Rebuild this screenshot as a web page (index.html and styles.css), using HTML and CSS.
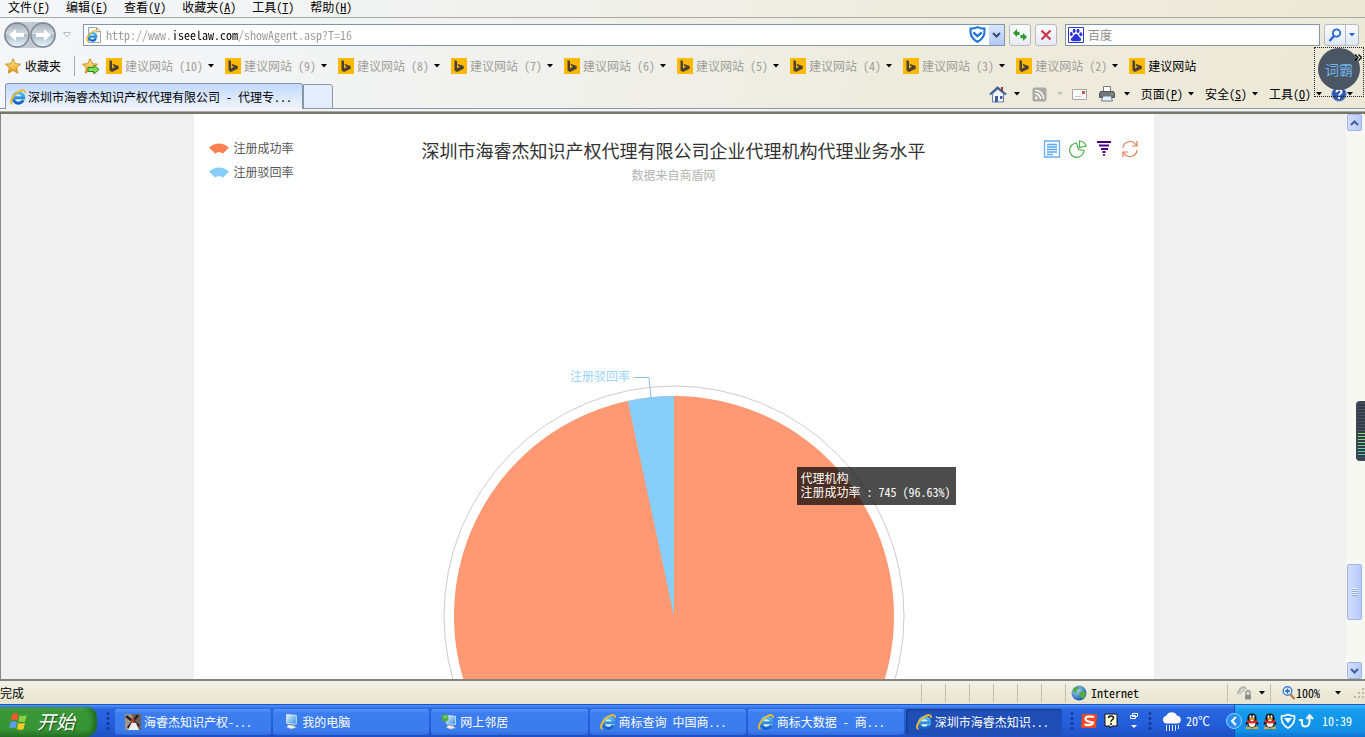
FILE: index.html
```html
<!DOCTYPE html>
<html lang="zh-CN">
<head>
<meta charset="utf-8">
<title>深圳市海睿杰知识产权代理有限公司 - 代理专利</title>
<link rel="stylesheet" href="styles.css">
</head>
<body>
<svg class="defs" aria-hidden="true">
  <defs>
    <linearGradient id="g-nav" x1="0" y1="0" x2="0" y2="1"><stop offset="0" stop-color="#a3adb8"/><stop offset=".45" stop-color="#d3dae1"/><stop offset=".5" stop-color="#adbac7"/><stop offset="1" stop-color="#e6f9fd"/></linearGradient>
    <linearGradient id="g-star" x1="0" y1="0" x2="0" y2="1"><stop offset="0" stop-color="#fff3a0"/><stop offset="1" stop-color="#f0960c"/></linearGradient>
    <linearGradient id="g-ie" x1="0" y1="0" x2="0" y2="1"><stop offset="0" stop-color="#4cbcf2"/><stop offset="1" stop-color="#1160c4"/></linearGradient>
    <linearGradient id="g-screen" x1="0" y1="0" x2="1" y2="1"><stop offset="0" stop-color="#e8f8ff"/><stop offset="1" stop-color="#2c8fe0"/></linearGradient>
    <radialGradient id="g-globe" cx=".35" cy=".3" r=".8"><stop offset="0" stop-color="#a8dcff"/><stop offset="1" stop-color="#0a4aa0"/></radialGradient>
  </defs>
  <symbol id="ie" viewBox="0 0 16 16"><circle cx="8.500" cy="8.500" r="6.300" fill="#d9f0fd"/><path d="M13.300 11A5.200 5.200 0 1 1 13.700 8.800H5" fill="none" stroke="url(#g-ie)" stroke-width="3"/><path d="M2.500 15C-1 14 2 7 8 3c3.500-2.400 7.500-3 6.800.8" fill="none" stroke="#f3b92c" stroke-width="1.900"/></symbol>
  <symbol id="bing" viewBox="0 0 16 16"><path fill="#ffb900" d="M0 0h16v16H0z"/><path fill="#4a4238" d="M3.500 2l2.500.9v7.600l3-1.700-1.600-.8-1-2.300 6.300 2.300v2.700L6 14l-2.500-1.500z"/></symbol>
  <symbol id="star" viewBox="0 0 16 16"><path d="M8 .8l2.200 4.900 5.300.5-4 3.600 1.200 5.300L8 12.300l-4.700 2.800 1.200-5.300-4-3.600 5.300-.5z" fill="url(#g-star)" stroke="#c58412" stroke-width=".9"/></symbol>
  <symbol id="down" viewBox="0 0 6 4"><path d="M0 0h6L3 3.500z" fill="currentColor"/></symbol>
  <symbol id="shield" viewBox="0 0 16 16"><path d="M1.500 2.500Q5 2.600 8 1q3 1.600 6.500 1.500v4Q14 11.500 8 15 2 11.500 1.500 6.500z" fill="#fff" stroke="currentColor" stroke-width="2"/><path d="M4 6l4 3.500L12 6" fill="none" stroke="currentColor" stroke-width="2.200"/></symbol>
  <symbol id="qq" viewBox="0 0 16 16"><path d="M2 15h5.500M8.500 15H14" stroke="#f7a813" stroke-width="2"/><path d="M3.500 7C3 2 5 .5 8 .5S13 2 12.500 7l2.200 4-1 1-1.200-1q-.5 3.500-4.500 3.500T3.500 11l-1.200 1-1-1z" fill="#191919"/><ellipse cx="8" cy="10.500" rx="3.400" ry="3.500" fill="#fff"/><ellipse cx="6.500" cy="3.700" rx="1" ry="1.400" fill="#fff"/><ellipse cx="9.500" cy="3.700" rx="1" ry="1.400" fill="#fff"/><ellipse cx="8" cy="6" rx="3" ry=".9" fill="#f8a91a"/><path d="M3.200 7q4.800 2.300 9.600 0l.4 2.400q-5.200 2-10.400 0z" fill="#e5231b"/></symbol>
  <symbol id="pc" viewBox="0 0 18 18"><path d="M4 .5l11 1v10l-11-1z" fill="url(#g-screen)" stroke="#cfe4f8"/><path d="M6 12l6 1 3 2.500-6 1.500-5-2z" fill="#eeeee8" stroke="#8693a5" stroke-width=".6"/></symbol>
</svg>

<header class="chrome">
  <nav class="menu">
    <button>文件(<u>F</u>)</button><button>编辑(<u>E</u>)</button><button>查看(<u>V</u>)</button><button>收藏夹(<u>A</u>)</button><button>工具(<u>T</u>)</button><button>帮助(<u>H</u>)</button>
  </nav>

  <div class="address-row">
    <div class="travel">
      <button aria-label="后退"><svg width="26" height="26" viewBox="0 0 26 26"><circle cx="13" cy="13" r="12" fill="url(#g-nav)" stroke="#7d8894" stroke-width="1.500"/><path d="M5 13l7-6v4h8v4h-8v4z" fill="#fff"/></svg></button>
      <button aria-label="前进"><svg width="26" height="26" viewBox="0 0 26 26"><circle cx="13" cy="13" r="12" fill="url(#g-nav)" stroke="#7d8894" stroke-width="1.500"/><path d="M21 13l-7-6v4H6v4h8v4z" fill="#fff"/></svg></button>
    </div>
    <button class="recent" aria-label="最近页面"><svg width="8" height="6" viewBox="0 0 8 6"><path d="M.5.500h7L4 5z" fill="#fff" stroke="#b6bac0"/></svg></button>
    <div class="field url">
      <svg width="16" height="16" viewBox="0 0 16 16"><path d="M2.500.500h8l4 4v11h-12z" fill="#fff" stroke="#9aa4ae"/><path d="M10.500.500v4h4" fill="none" stroke="#9aa4ae"/><use href="#ie" x="0" y="3" width="12" height="12"/></svg>
      <input aria-label="地址" value="http://www.iseelaw.com/showAgent.asp?T=16">
      <svg class="guard" width="17" height="17"><use href="#shield"/></svg>
      <button class="drop" aria-label="展开地址"><svg width="9" height="6" viewBox="0 0 9 6"><path d="M1 1l3.500 3.500L8 1" fill="none" stroke="#38496e" stroke-width="2"/></svg></button>
    </div>
    <button class="square" aria-label="刷新"><svg width="14" height="14" viewBox="0 0 14 14"><path d="M0 5l4-4v2.800h2.500V7H4v2zM14 9l-4 4v-2.800H7.500V7H10V5z" fill="#2e9b2e"/></svg></button>
    <button class="square" aria-label="停止"><svg width="12" height="12" viewBox="0 0 12 12"><path d="M1.500 1.500l9 9M10.500 1.500l-9 9" stroke="#c8394a" stroke-width="2.200"/></svg></button>
    <div class="field search">
      <svg width="16" height="16" viewBox="0 0 16 16"><path d="M.5.500h15v15H.5z" fill="#fff" stroke="#2b35d8"/><g fill="#2b35d8"><ellipse cx="3.300" cy="7" rx="1.500" ry="2"/><ellipse cx="6.200" cy="3.800" rx="1.500" ry="2.100"/><ellipse cx="10" cy="3.900" rx="1.500" ry="2.100"/><ellipse cx="12.800" cy="7.300" rx="1.500" ry="2"/><path d="M8 6.800q1.500.2 2.500 2t2.400 2.500q.7 3.300-2.400 3H5.500q-3.100.3-2.400-3 1.400-.8 2.400-2.500t2.500-2z"/></g></svg>
      <input aria-label="搜索" placeholder="百度">
    </div>
    <div class="search-buttons">
      <button aria-label="搜索"><svg width="14" height="14" viewBox="0 0 14 14"><circle cx="8.500" cy="5" r="3.700" fill="#eef6ff" stroke="#2867d8" stroke-width="1.800"/><path d="M6 8l-4.500 5" stroke="#2867d8" stroke-width="2.400"/></svg></button>
      <button aria-label="搜索选项"><svg class="blue" width="6" height="4"><use href="#down"/></svg></button>
    </div>
  </div>

  <div class="favorites">
    <button class="fav-main"><svg width="16" height="16"><use href="#star"/></svg>收藏夹</button>
    <button class="fav-add" aria-label="添加到收藏夹栏"><svg width="18" height="17" viewBox="0 0 18 17"><use href="#star" width="16" height="16"/><path d="M6 9.500h6V7l5 4.500-5 4.500v-2.500H6z" fill="#7fdb58" stroke="#258a24"/></svg></button>
    <nav class="links">
      <a href="#"><svg width="16" height="16"><use href="#bing"/></svg><span>建议网站 (10)</span><svg class="arrow" width="6" height="4"><use href="#down"/></svg></a>
      <a href="#"><svg width="16" height="16"><use href="#bing"/></svg><span>建议网站 (9)</span><svg class="arrow" width="6" height="4"><use href="#down"/></svg></a>
      <a href="#"><svg width="16" height="16"><use href="#bing"/></svg><span>建议网站 (8)</span><svg class="arrow" width="6" height="4"><use href="#down"/></svg></a>
      <a href="#"><svg width="16" height="16"><use href="#bing"/></svg><span>建议网站 (7)</span><svg class="arrow" width="6" height="4"><use href="#down"/></svg></a>
      <a href="#"><svg width="16" height="16"><use href="#bing"/></svg><span>建议网站 (6)</span><svg class="arrow" width="6" height="4"><use href="#down"/></svg></a>
      <a href="#"><svg width="16" height="16"><use href="#bing"/></svg><span>建议网站 (5)</span><svg class="arrow" width="6" height="4"><use href="#down"/></svg></a>
      <a href="#"><svg width="16" height="16"><use href="#bing"/></svg><span>建议网站 (4)</span><svg class="arrow" width="6" height="4"><use href="#down"/></svg></a>
      <a href="#"><svg width="16" height="16"><use href="#bing"/></svg><span>建议网站 (3)</span><svg class="arrow" width="6" height="4"><use href="#down"/></svg></a>
      <a href="#"><svg width="16" height="16"><use href="#bing"/></svg><span>建议网站 (2)</span><svg class="arrow" width="6" height="4"><use href="#down"/></svg></a>
      <a href="#" class="plain"><svg width="16" height="16"><use href="#bing"/></svg><span>建议网站</span></a>
    </nav>
  </div>

  <div class="tab-row">
    <button class="tab"><svg width="16" height="16"><use href="#ie"/></svg><span>深圳市海睿杰知识产权代理有限公司 - 代理专...</span></button>
    <button class="new-tab" aria-label="新选项卡"></button>
    <div class="commands">
      <button aria-label="主页"><svg width="18" height="17" viewBox="0 0 18 17"><path d="M3.500 8v8h11V8L9 3z" fill="#f4f7fd" stroke="#6d7ea5"/><path d="M1 8.500L8.500 1.500 17 8.500" fill="none" stroke="#3f5c9c" stroke-width="2"/><path d="M12 1h2v4h-2z" fill="#a13a32"/><path d="M6 10h3v6H6z" fill="#3c5fa8"/><path d="M11 10h2.500v3H11z" fill="#3c5fa8"/></svg><svg class="arrow" width="6" height="4"><use href="#down"/></svg></button>
      <button class="off" aria-label="源"><svg width="15" height="15" viewBox="0 0 15 15"><rect x=".5" y=".5" width="14" height="14" rx="2" fill="#aaa9a2"/><path d="M3 6.500a5.500 5.500 0 0 1 5.500 5.500M3 3.200A8.800 8.800 0 0 1 11.800 12" fill="none" stroke="#fff" stroke-width="1.500"/><circle cx="4.200" cy="10.900" r="1.400" fill="#fff"/></svg><svg class="arrow" width="6" height="4"><use href="#down"/></svg></button>
      <button class="mail" aria-label="阅读邮件"><svg width="15" height="11" viewBox="0 0 15 11"><path d="M.5.500h14v10H.5z" fill="#fbfbfa" stroke="#a7a7a7"/><path d="M10 2h3v3h-3z" fill="#cf5a50"/><path d="M3 7.500h6" stroke="#c8c8c8"/></svg></button>
      <button class="print" aria-label="打印"><svg width="16" height="16" viewBox="0 0 16 16"><path d="M4.500.500h7v6h-7z" fill="#fff" stroke="#777"/><path d="M1.500 5.500h13l1 2v4H.500v-4z" fill="#72767b" stroke="#505459"/><path d="M4 10h8l1.500 5h-11z" fill="#e4f2ff" stroke="#6b7a88"/><path d="M12 8h2" stroke="#7be46d"/></svg><svg class="arrow" width="6" height="4"><use href="#down"/></svg></button>
      <button class="named"><span>页面(<u>P</u>)</span><svg class="arrow" width="6" height="4"><use href="#down"/></svg></button>
      <button class="named"><span>安全(<u>S</u>)</span><svg class="arrow" width="6" height="4"><use href="#down"/></svg></button>
      <button class="named"><span>工具(<u>O</u>)</span><svg class="arrow" width="6" height="4"><use href="#down"/></svg></button>
      <button class="help" aria-label="帮助"><svg width="16" height="16" viewBox="0 0 16 16"><circle cx="8" cy="8" r="7.300" fill="#3157ae" stroke="#93a9d8"/><path d="M5.500 6.200q0-2.400 2.500-2.400t2.500 2.200q0 1-1.200 1.700T8.100 9.600M8 11v2" fill="none" stroke="#fff" stroke-width="1.900"/></svg><svg class="arrow" width="6" height="4"><use href="#down"/></svg></button>
    </div>
  </div>
  <aside class="word-helper">
    <button>词霸</button>
    <svg class="more" width="8" height="7" viewBox="0 0 8 7"><path d="M1 .5l3 3-3 3M4.500.500l3 3-3 3" fill="none" stroke="#000" stroke-width="1.300"/></svg>
  </aside>
</header>

<main class="viewport">
  <section class="page">
    <div class="chart-head">
      <ul class="legend">
        <li><svg width="20" height="11" viewBox="0 0 20 11"><path d="M0 4.500Q10-3.500 20 4.500L14 10.500Q10 7.500 6 10.500z" fill="#ff7f50"/></svg>注册成功率</li>
        <li><svg width="20" height="11" viewBox="0 0 20 11"><path d="M0 4.500Q10-3.500 20 4.500L14 10.500Q10 7.500 6 10.500z" fill="#87cefa"/></svg>注册驳回率</li>
      </ul>
      <div class="titles">
        <h1>深圳市海睿杰知识产权代理有限公司企业代理机构代理业务水平</h1>
        <p>数据来自商盾网</p>
      </div>
      <div class="tools">
        <button aria-label="数据视图"><svg width="18" height="18" viewBox="0 0 18 18"><path d="M1.500 1h15v16h-15z" fill="none" stroke="#66aef5" stroke-width="1.300"/><path d="M4 4.500h10M4 7h10M4 9.500h10M4 12h10M4 14.500h6" stroke="#5ba4f0" stroke-width="1.300"/></svg></button>
        <button aria-label="饼图"><svg width="18" height="18" viewBox="0 0 18 18"><path d="M7.500 3A7.200 7.200 0 1 0 15 10.500L9.500 9.500z" fill="none" stroke="#45b045" stroke-width="1.200"/><path d="M10.500 1v6.500L17 6Q15.500 1.200 10.500 1z" fill="none" stroke="#45b045" stroke-width="1.200"/></svg></button>
        <button aria-label="漏斗图"><svg width="18" height="18" viewBox="0 0 18 18"><path d="M2 2h14M4 5.500h10M6 9h7M7.500 12h3M8.200 15h1.600" stroke="#4b0082" stroke-width="2"/></svg></button>
        <button aria-label="还原"><svg width="18" height="18" viewBox="0 0 18 18"><path d="M2 8A7 7 0 0 1 15 5M16 10A7 7 0 0 1 3 13M16 1v5h-5M2 17v-5h5" fill="none" stroke="#e07a4e" stroke-width="1.200"/></svg></button>
      </div>
    </div>
    <div class="plot">
      <svg class="pie" width="960" height="660" viewBox="0 0 960 660" role="img" aria-label="注册成功率 96.63%，注册驳回率 3.37%">
        <circle cx="480" cy="416" r="230" fill="none" stroke="#ccc"/>
        <circle cx="480" cy="416" r="220" fill="#ff9973"/>
        <path d="M480 416L433.800 200.900A220 220 0 0 1 480 196z" fill="#87cefa"/>
        <path d="M440 177.500h15l2 20" fill="none" stroke="#87bdee"/>
        <text x="436" y="181" text-anchor="end">注册驳回率</text>
      </svg>
      <div class="tip"><span>代理机构</span><span>注册成功率 : 745 (96.63%)</span></div>
    </div>
  </section>
  <div class="scroll">
    <button aria-label="向上滚动"><svg width="9" height="6" viewBox="0 0 9 6"><path d="M1 5l3.500-3.500L8 5" fill="none" stroke="#405f94" stroke-width="2"/></svg></button>
    <div class="track"><div class="thumb"><i></i></div></div>
    <button aria-label="向下滚动"><svg width="9" height="6" viewBox="0 0 9 6"><path d="M1 1l3.500 3.500L8 1" fill="none" stroke="#405f94" stroke-width="2"/></svg></button>
  </div>
  <div class="gadget"></div>
</main>

<footer class="status">
  <span class="done">完成</span>
  <i></i><i></i><i></i><i></i><i></i><i></i>
  <span class="zone"><svg width="16" height="16" viewBox="0 0 16 16"><circle cx="8" cy="8" r="7.500" fill="url(#g-globe)"/><path d="M2 4q3-3 6-2.500 1 2-1 3T6 8L3 7.500zM8 8l4-2 3 2q0 3-2.500 5.500L10 13z" fill="#4fae3b"/></svg>Internet</span>
  <button class="protect" aria-label="保护模式"><svg width="16" height="16" viewBox="0 0 16 16"><path d="M1 9q1-6 6-7l2 2" fill="none" stroke="#b4b4ae" stroke-width="2"/><path d="M3 9q2-4 5-4" fill="none" stroke="#c8c8c2" stroke-width="2"/><path d="M8 9.500h6v5H8z" fill="#8d8d88"/><path d="M9 9V7q2-2.500 4 0v2" fill="none" stroke="#8d8d88" stroke-width="1.300"/></svg><svg class="arrow" width="6" height="4"><use href="#down"/></svg></button>
  <button class="zoom"><svg width="14" height="14" viewBox="0 0 14 14"><path d="M8 8l4.500 5" stroke="#c07b41" stroke-width="2.300"/><circle cx="5.500" cy="5" r="4.300" fill="#e7f4ff" stroke="#3f81d4" stroke-width="1.400"/><path d="M3 5h5M5.500 2.500v5" stroke="#2860c4" stroke-width="1.500"/></svg><span>100%</span><svg class="arrow" width="6" height="4"><use href="#down"/></svg></button>
  <svg class="grip" width="12" height="12" viewBox="0 0 12 12"><path d="M9 1h2v2H9zM5 5h2v2H5zM9 5h2v2H9zM1 9h2v2H1zM5 9h2v2H5zM9 9h2v2H9z" fill="#bdb9a5"/></svg>
</footer>

<footer class="taskbar">
  <button class="start"><svg width="20" height="19" viewBox="0 0 20 19"><path d="M3 3q3-2.500 6.500-.5L8.300 8.500Q5 6.800 1.700 9z" fill="#f0592b"/><path d="M10.700 3q3 1.800 7 0l-1.400 6.200q-3.300 1.700-6.800 0z" fill="#8cd13f"/><path d="M1.500 10.300q3-2 6.500-.3l-1.300 6.200q-3-1.700-6.500.3z" fill="#5b9cf4"/><path d="M9.200 10.700q3 1.700 6.800.1l-1.400 6.300q-3 1.600-6.700 0z" fill="#fbc82c"/></svg><em>开始</em></button>
  <i class="dots"></i>
  <nav class="tasks">
    <button><svg width="16" height="16" viewBox="0 0 16 16"><path d="M0 0h16v16H0z" fill="#716257"/><path d="M0 0h6l4 7-4 9H0z" fill="#a2958a"/><path d="M1 2l13 10M13 1L3 14" stroke="#28231f" stroke-width="2.500"/><path d="M7 8l4 1 3 7H3z" fill="#efeff2"/><path d="M6 4l4 1-1 4-3-1z" fill="#a8392b"/></svg><span>海睿杰知识产权-...</span></button>
    <button><svg width="16" height="16"><use href="#pc"/></svg><span>我的电脑</span></button>
    <button><svg width="16" height="16" viewBox="0 0 16 16"><use href="#pc" x="2" y="1" width="15" height="15"/><circle cx="4" cy="4" r="3.500" fill="#4fae3b"/><path d="M2 3q3-2 4 1z" fill="#a6e4ff"/></svg><span>网上邻居</span></button>
    <button><svg width="16" height="16"><use href="#ie"/></svg><span>商标查询 中国商...</span></button>
    <button><svg width="16" height="16"><use href="#ie"/></svg><span>商标大数据 - 商...</span></button>
    <button class="active"><svg width="16" height="16"><use href="#ie"/></svg><span>深圳市海睿杰知识...</span></button>
  </nav>
  <i class="dots"></i>
  <div class="lang">
    <svg width="17" height="16" viewBox="0 0 17 16"><path d="M1 1h15l-1 14H0z" fill="#f04a22"/><path d="M13 4Q5 2.500 4.500 5.500T12 9.500Q11.500 13 3.500 11.700" fill="none" stroke="#fff" stroke-width="2.200"/></svg>
    <svg width="14" height="16" viewBox="0 0 14 16"><path d="M1 1h12v12H8l-2 2v-2H1z" fill="#ffffdf" stroke="#111"/><path d="M4.500 5q0-2 2.500-2t2.500 2Q9.500 6 8 7T7 9M7 10v2" fill="none" stroke="#111" stroke-width="1.500"/></svg>
    <svg width="10" height="18" viewBox="0 0 10 18"><path d="M3.500 1.500h5v3h-5zM1.500 3.500h5v3h-5z" fill="#245bd8" stroke="#fff"/><path d="M2 13h6l-3 3z" fill="#fff"/></svg>
  </div>
  <i class="dots"></i>
  <div class="weather"><svg width="20" height="20" viewBox="0 0 20 20"><path d="M4 12.500a4 4 0 0 1 .3-7.800 6 6 0 0 1 10.800 0 4 4 0 0 1 .9 7.800z" fill="#fff"/><path d="M4.500 14v6M7.500 14v6M10.500 14v6M13.500 14v6M16.500 14v4" stroke="#dbe8ff"/></svg>20℃</div>
  <div class="tray">
    <button class="collapse" aria-label="隐藏图标"><svg width="16" height="16" viewBox="0 0 16 16"><circle cx="8" cy="8" r="7.500" fill="#2a8ff0" stroke="#8bd0ff"/><path d="M9.800 4L6 8l3.800 4" fill="none" stroke="#fff" stroke-width="2"/></svg></button>
    <svg width="16" height="16"><use href="#qq"/></svg>
    <svg width="16" height="16"><use href="#qq"/></svg>
    <svg width="16" height="16" viewBox="0 0 16 16"><path d="M1.500 3Q5 3 8 1.500 11 3 14.500 3v3.500Q13.500 12 8 15 2.500 12 1.500 6.500z" fill="none" stroke="#fff" stroke-width="1.600"/><path d="M4 5h8L8 10z" fill="#fff"/></svg>
    <svg width="16" height="16" viewBox="0 0 16 16"><path d="M1 7h3v3q0 3.500 3.500 3.500T11.500 9V4M8.500 6l3-4 3.500 4" fill="none" stroke="#fff" stroke-width="2"/></svg>
    <time>10:39</time>
  </div>
</footer>
</body>
</html>
```

FILE: styles.css
```css
* { box-sizing: border-box; }
body {
  margin: 0;
  height: 100vh;
  display: flex;
  flex-direction: column;
  overflow: hidden;
  font: 12px/14px "Noto Sans Mono CJK SC", "Noto Sans CJK SC", sans-serif;
  color: #000;
}
button, input {
  font: inherit;
  color: inherit;
  border: 0;
  padding: 0;
  margin: 0;
  background: none;
  white-space: nowrap;
}
button { display: flex; align-items: center; }
svg { display: block; flex: none; }
.defs { position: absolute; width: 0; height: 0; }
.arrow { color: #000; }

/* browser chrome */
.chrome {
  position: relative;
  flex: none;
  background: linear-gradient(100deg, #f4f6fa 0, #f1f2f0 35%, #eeecdf 65%, #ede9d8 100%);
  border-bottom: 2px solid #77766a;
}
.menu { display: flex; gap: 16px; height: 18px; padding: 0 8px 3px; border-bottom: 1px solid #a8aaa5; }
.address-row { display: flex; align-items: center; height: 33px; padding: 0 6px 0 4px; }
.travel { display: flex; border-radius: 14px; background: #c4cad0; margin-right: 7px; }
.recent { width: 20px; }
.field { display: flex; align-items: center; height: 22px; background: #fff; border: 1px solid #8296a8; }
.field input { flex: 1; min-width: 0; height: 20px; outline: 0; }
.url { flex: 1; padding-left: 2px; margin-right: 4px; }
.url input {
  margin-left: 4px;
  color: transparent;
  background: linear-gradient(to right, #999 66px, #000 66px, #000 132px, #999 132px);
  -webkit-background-clip: text;
  background-clip: text;
}
.guard { color: #2274dd; margin-right: 3px; }
.drop { width: 15px; height: 20px; justify-content: center; background: linear-gradient(#dae5fd, #b3c8f5); }
.square {
  width: 22px;
  height: 22px;
  justify-content: center;
  margin-right: 4px;
  border: 1px solid #b4b9c2;
  border-radius: 3px;
  background: linear-gradient(#fcfcfc, #e8ebf2);
}
.search { width: 255px; padding-left: 2px; margin: 0 4px; }
.search input { margin-left: 4px; }
.search input::placeholder { color: #8d8d8d; opacity: 1; }
.search-buttons { display: flex; border: 1px solid #b4b9c2; border-radius: 3px; background: linear-gradient(#fcfdff, #dfe7f6); }
.search-buttons button { height: 20px; width: 20px; justify-content: center; }
.search-buttons button + button { width: 13px; border-left: 1px solid #b4b9c2; }
.blue { color: #2867d8; }

.favorites { display: flex; align-items: center; height: 30px; padding-left: 5px; }
.fav-main { gap: 4px; width: 70px; height: 20px; border-right: 1px solid #aaa; }
.fav-add { margin: 0 6px 0 7px; }
.links { display: flex; }
.links a { display: flex; align-items: center; color: #a09f97; text-decoration: none; white-space: nowrap; margin-right: 11px; }
.links span { margin: 0 5px 0 3px; }
.links .plain { color: #000; }

.tab-row {
  display: flex;
  align-items: flex-start;
  height: 31px;
  padding: 2px 12px 0 5px;
  border-bottom: 1px solid #aaaba2;
  background: linear-gradient(to bottom, transparent 27px, #8797a8 27px, #8797a8 28px, #f2f4f8 28px);
}
.tab {
  width: 298px;
  height: 26px;
  gap: 2px;
  padding-left: 4px;
  border: 1px solid #8797a8;
  border-bottom: 0;
  border-radius: 3px 3px 0 0;
  background: linear-gradient(#c1d9fe, #e3edfc 70%, #f2f4f8);
}
.new-tab { width: 30px; height: 25px; margin-top: 1px; border: 1px solid #8797a8; border-radius: 0 3px 2px 0; background: #e3edfd; }
.commands { display: flex; align-items: center; height: 22px; margin-left: auto; }
.commands button { gap: 7px; margin-left: 12px; }
.commands .off { gap: 10px; }
.commands .off .arrow { color: #c6c4ba; }
.commands .mail { margin-left: 9px; }
.commands .print { gap: 9px; }
.commands .named { gap: 5px; margin-left: 11px; }
.commands .help { gap: 0; margin-left: 9px; }

.word-helper { position: absolute; right: 1px; top: 47px; width: 50px; height: 50px; border: 1px dotted #222; }
.word-helper button {
  width: 42px;
  height: 42px;
  margin-left: 3px;
  justify-content: center;
  border-radius: 50%;
  background: #4b5664;
  color: #6fb2ea;
  font-size: 14px;
}
.word-helper .more { position: absolute; right: 1px; top: 6px; }

/* page */
.viewport { position: relative; flex: 1; min-height: 0; display: flex; background: #f0f0f0; border-left: 1px solid #888; overflow: hidden; }
.page { width: 960px; margin: 0 auto; background: #fff; overflow: hidden; }
.chart-head {
  display: grid;
  grid-template-columns: 1fr auto 1fr;
  height: 86px;
  padding: 24px 15px 0;
  font-family: "Noto Sans CJK SC", sans-serif;
}
.legend { list-style: none; margin: 0; padding: 0; color: #555; line-height: 20px; display: flex; flex-direction: column; gap: 4px; }
.legend li { display: flex; align-items: center; gap: 5px; }
.titles { text-align: center; }
.titles h1 { margin: 0; font-size: 18px; line-height: 24px; font-weight: 400; color: #333; }
.titles p { margin: 6px 0 0; color: #b4b4b4; }
.tools { display: flex; justify-content: flex-end; align-items: flex-start; gap: 8px; padding-top: 2px; }
.plot { position: relative; }
.pie text { font: 12px "Noto Sans CJK SC", sans-serif; fill: #9ad4f8; }
.tip {
  position: absolute;
  left: 603px;
  top: 267px;
  display: flex;
  flex-direction: column;
  padding: 4px 5px 6px 4px;
  background: rgba(0, 0, 0, .7);
  color: #fff;
  white-space: nowrap;
}

.scroll { flex: none; width: 19px; padding: 0 1px; display: flex; flex-direction: column; background: #f8f8f2; }
.scroll button, .thumb {
  width: 15px;
  height: 17px;
  justify-content: center;
  border: 1px solid #9fb5e8;
  border-radius: 2px;
  background: linear-gradient(to right, #d2defe, #b6c9f8);
}
.track { flex: 1; display: flex; flex-direction: column; justify-content: flex-end; padding-bottom: 42px; }
.thumb { height: 56px; display: flex; align-items: center; }
.thumb i { width: 6px; height: 8px; background: repeating-linear-gradient(#eef4fe 0 1px, #8ea8e0 1px 2px); }
.gadget {
  position: absolute;
  right: 0;
  top: 287px;
  width: 9px;
  height: 60px;
  border: 2px solid #3f4654;
  border-right: 0;
  border-radius: 4px 0 0 4px;
  background: linear-gradient(#4b5260 30px, #93e070 30px, #4fd0b8 52px, #4b5260 52px);
}
.gadget::after { content: ""; display: block; height: 56px; background: repeating-linear-gradient(transparent 0 1px, #343b48 1px 3px); }

/* status bar */
.status {
  flex: none;
  display: flex;
  align-items: center;
  height: 25px;
  border-top: 2px solid #85847a;
  background: linear-gradient(#f4f2e8, #ece9d8 50%, #e8e4d2);
}
.done { flex: 1; }
.status > i { width: 24px; height: 18px; border-left: 1px solid #c2bfae; }
.zone { display: flex; align-items: center; gap: 4px; width: 162px; height: 18px; padding-left: 5px; border-left: 1px solid #c2bfae; }
.protect { width: 43px; height: 18px; gap: 6px; padding-left: 9px; border-left: 1px solid #c2bfae; }
.zoom { height: 18px; width: 83px; padding-left: 11px; border-left: 1px solid #c2bfae; }
.zoom .arrow { margin-left: 15px; }

/* taskbar */
.taskbar {
  flex: none;
  display: flex;
  align-items: stretch;
  height: 33px;
  color: #fff;
  border-top: 1px solid #1c55c8;
  background: linear-gradient(#4b93f5 0, #2a66e0 4px, #245edb 60%, #1f50c2);
}
.start {
  width: 97px;
  padding: 0 0 2px 9px;
  gap: 8px;
  margin: 2px 8px 0 0;
  border-radius: 0 10px 12px 0;
  background: linear-gradient(#5fb45c, #3a9738 15%, #379433 75%, #2a7426);
  box-shadow: inset -4px 0 5px #226a22;
  font-size: 19px;
  text-shadow: 1px 1px 1px #1d4d1b;
}
.dots { flex: none; width: 6px; margin: 6px 0 5px; background: radial-gradient(circle, #143a96 1px, transparent 2px) 0 0 / 6px 5px; }
.tasks { display: flex; flex: 1; gap: 2px; margin: 4px 7px 2px 4px; }
.tasks button {
  flex: 1 1 0;
  min-width: 0;
  gap: 3px;
  padding-left: 10px;
  border-radius: 3px;
  background: linear-gradient(#5c97fa, #3c7df0 15%, #3b7bee 85%, #3069da);
}
.tasks .active { background: #1f4fb6; box-shadow: inset 1px 1px 2px #123684; }
.lang { display: flex; align-items: center; width: 72px; gap: 6px; padding-left: 6px; }
.lang svg:last-child { margin-left: 5px; }
.weather { display: flex; align-items: center; gap: 4px; padding-left: 9px; width: 81px; }
.tray {
  display: flex;
  align-items: center;
  gap: 2px;
  width: 131px;
  border-left: 1px solid #0d52b4;
  background: linear-gradient(#3cb8f8, #149bec 6px, #1290e8 80%, #0e75d0);
}
.tray .collapse { margin-left: -9px; }
.tray time { margin-left: 6px; }
```
